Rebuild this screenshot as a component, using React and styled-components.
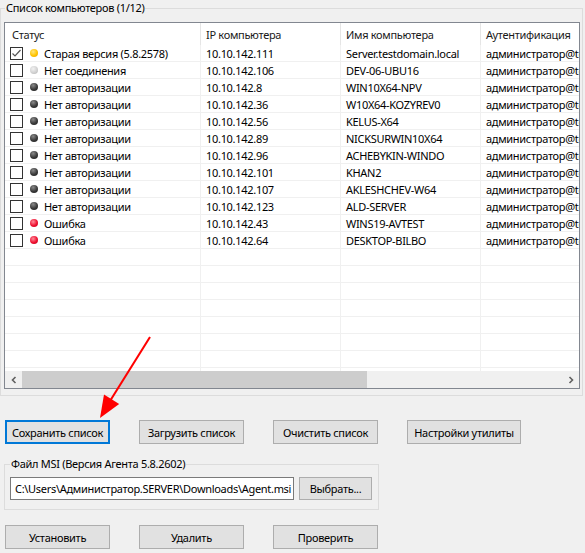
import React from "react";
import styled, { createGlobalStyle } from "styled-components";

const GlobalStyle = createGlobalStyle`
  html, body {
    margin: 0;
    background: #f0f0f0;
  }
  body {
    font-family: "Noto Sans", "Liberation Sans", sans-serif;
    font-size: 11px;
    letter-spacing: -0.3px;
    color: #000;
  }
`;

const Window = styled.div`
  position: relative;
  width: 585px;
  height: 553px;
  overflow: hidden;
  background: #f0f0f0;
`;

const Group = styled.div`
  position: relative;
  border: 1px solid #dcdcdc;
  margin: ${(p) => p.$margin};
  padding: ${(p) => p.$padding};
  width: ${(p) => p.$width};
  box-sizing: border-box;
`;

const Legend = styled.span`
  position: absolute;
  left: ${(p) => p.$left || "4px"};
  top: -9px;
  padding: 0 1px;
  background: #f0f0f0;
  line-height: 16px;
  white-space: nowrap;
`;

const ListBox = styled.div`
  width: 576px;
  height: 367px;
  box-sizing: border-box;
  border: 1px solid #828790;
  background: #fff;
  display: flex;
  flex-direction: column;
  overflow: hidden;
`;

const Grid = styled.div`
  flex: 1;
  overflow: hidden;
`;

const Header = styled.div`
  display: grid;
  grid-template-columns: 196px 140px 140px 140px;
  height: 22px;
  background: #fff;
`;

const HeadCell = styled.div`
  display: flex;
  align-items: center;
  padding-left: ${(p) => p.$pad || "5px"};
  border-right: 1px solid #e5e5e5;
  white-space: nowrap;
  color: #1a1a1a;
`;

const Row = styled.div`
  display: grid;
  grid-template-columns: 196px 140px 140px 140px;
  height: 17px;
  box-sizing: border-box;
  border-bottom: 1px solid #f0f0f0;
`;

const Cell = styled.div`
  display: flex;
  align-items: center;
  padding-left: 5px;
  border-right: 1px solid #f0f0f0;
  white-space: nowrap;
  overflow: hidden;
`;

const Check = styled.span`
  width: 13px;
  height: 13px;
  box-sizing: border-box;
  border: 1px solid #333;
  background: #fff;
  display: flex;
  align-items: center;
  justify-content: center;
  flex: none;
`;

const dotColors = {
  old: "radial-gradient(circle at 40% 35%, #ffe680 0%, #ffc400 55%, #e8a000 100%)",
  off: "radial-gradient(circle at 40% 35%, #f2f2f2 0%, #cfcfcf 60%, #a8a8a8 100%)",
  auth: "radial-gradient(circle at 40% 30%, #8a8a8a 0%, #3a3a3a 55%, #1a1a1a 100%)",
  err: "radial-gradient(circle at 40% 35%, #ff8c9a 0%, #ee1030 55%, #b8001a 100%)",
};

const Dot = styled.span`
  width: 8px;
  height: 8px;
  border-radius: 50%;
  background: ${(p) => dotColors[p.$kind]};
  margin: 0 6px 0 7px;
  flex: none;
`;

const ScrollBar = styled.div`
  height: 17px;
  display: flex;
  background: #f0f0f0;
  flex: none;
`;

const ScrollArrow = styled.div`
  width: 17px;
  display: flex;
  align-items: center;
  justify-content: center;
  flex: none;
`;

const ScrollTrack = styled.div`
  flex: 1;
  display: flex;
`;

const Thumb = styled.div`
  width: 345px;
  background: #cdcdcd;
`;

const ButtonRow = styled.div`
  display: flex;
  gap: 29px;
  margin: ${(p) => p.$margin};
  padding-left: 5px;
`;

const Button = styled.button`
  font: inherit;
  letter-spacing: inherit;
  color: #000;
  width: ${(p) => p.$width || "105px"};
  height: ${(p) => p.$height || "24px"};
  background: #e1e1e1;
  border: ${(p) => (p.$default ? "2px solid #0078d7" : "1px solid #adadad")};
  padding: 0;
  margin: 0;
  flex: none;
  white-space: nowrap;
`;

const FileRow = styled.div`
  display: flex;
  gap: 5px;
  align-items: center;
`;

const FileInput = styled.div`
  width: 284px;
  height: 23px;
  box-sizing: border-box;
  border: 1px solid #7a7a7a;
  background: #fff;
  display: flex;
  align-items: center;
  padding-left: 4px;
  white-space: nowrap;
  overflow: hidden;
`;

const Arrow = styled.svg`
  position: absolute;
  left: 0;
  top: 0;
  pointer-events: none;
`;

const rows = [
  { checked: true, kind: "old", status: "Старая версия (5.8.2578)", ip: "10.10.142.111", name: "Server.testdomain.local" },
  { kind: "off", status: "Нет соединения", ip: "10.10.142.106", name: "DEV-06-UBU16" },
  { kind: "auth", status: "Нет авторизации", ip: "10.10.142.8", name: "WIN10X64-NPV" },
  { kind: "auth", status: "Нет авторизации", ip: "10.10.142.36", name: "W10X64-KOZYREV0" },
  { kind: "auth", status: "Нет авторизации", ip: "10.10.142.56", name: "KELUS-X64" },
  { kind: "auth", status: "Нет авторизации", ip: "10.10.142.89", name: "NICKSURWIN10X64" },
  { kind: "auth", status: "Нет авторизации", ip: "10.10.142.96", name: "ACHEBYKIN-WINDO" },
  { kind: "auth", status: "Нет авторизации", ip: "10.10.142.101", name: "KHAN2" },
  { kind: "auth", status: "Нет авторизации", ip: "10.10.142.107", name: "AKLESHCHEV-W64" },
  { kind: "auth", status: "Нет авторизации", ip: "10.10.142.123", name: "ALD-SERVER" },
  { kind: "err", status: "Ошибка", ip: "10.10.142.43", name: "WINS19-AVTEST" },
  { kind: "err", status: "Ошибка", ip: "10.10.142.64", name: "DESKTOP-BILBO" },
];

const emptyRows = Array.from({ length: 8 });

const Chevron = ({ dir }) => (
  <svg width="8" height="8" viewBox="0 0 8 8">
    <path
      d={dir === "left" ? "M5.5 1 L2.5 4 L5.5 7" : "M2.5 1 L5.5 4 L2.5 7"}
      fill="none"
      stroke="#606060"
      strokeWidth="1.6"
    />
  </svg>
);

export default function App() {
  return (
    <>
      <GlobalStyle />
      <Window>
        <Group $margin="8px 0 0 0" $padding="13px 3px 6px 3px" $width="583px">
          <Legend>Список компьютеров (1/12)</Legend>
          <ListBox>
            <Grid>
              <Header>
                <HeadCell $pad="7px">Статус</HeadCell>
                <HeadCell>IP компьютера</HeadCell>
                <HeadCell>Имя компьютера</HeadCell>
                <HeadCell>Аутентификация</HeadCell>
              </Header>
              {rows.map((r) => (
                <Row key={r.ip}>
                  <Cell>
                    <Check>
                      {r.checked && (
                        <svg width="11" height="11" viewBox="0 0 11 11">
                          <path d="M1.5 5.5 L4 8 L9.5 2" fill="none" stroke="#555" strokeWidth="1.2" />
                        </svg>
                      )}
                    </Check>
                    <Dot $kind={r.kind} />
                    {r.status}
                  </Cell>
                  <Cell>{r.ip}</Cell>
                  <Cell>{r.name}</Cell>
                  <Cell>администратор@testdomain</Cell>
                </Row>
              ))}
              {emptyRows.map((_, i) => (
                <Row key={i}>
                  <Cell />
                  <Cell />
                  <Cell />
                  <Cell />
                </Row>
              ))}
            </Grid>
            <ScrollBar>
              <ScrollArrow>
                <Chevron dir="left" />
              </ScrollArrow>
              <ScrollTrack>
                <Thumb />
              </ScrollTrack>
              <ScrollArrow>
                <Chevron dir="right" />
              </ScrollArrow>
            </ScrollBar>
          </ListBox>
        </Group>

        <ButtonRow $margin="24px 0 0 0">
          <Button $default>Сохранить список</Button>
          <Button>Загрузить список</Button>
          <Button>Очистить список</Button>
          <Button $width="114px">Настройки утилиты</Button>
        </ButtonRow>

        <Group $margin="20px 0 0 4px" $padding="12px 6px 9px 5px" $width="375px">
          <Legend $left="5px">Файл MSI (Версия Агента 5.8.2602)</Legend>
          <FileRow>
            <FileInput>C:\Users\Администратор.SERVER\Downloads\Agent.msi</FileInput>
            <Button $width="73px" $height="23px">Выбрать...</Button>
          </FileRow>
        </Group>

        <ButtonRow $margin="15px 0 0 0">
          <Button>Установить</Button>
          <Button>Удалить</Button>
          <Button>Проверить</Button>
        </ButtonRow>

        <Arrow width="585" height="553">
          <line x1="150" y1="337" x2="110" y2="401" stroke="#ff0000" strokeWidth="2" />
          <polygon points="100,418 104,394.6 119.2,404" fill="#ff0000" />
        </Arrow>
      </Window>
    </>
  );
}
